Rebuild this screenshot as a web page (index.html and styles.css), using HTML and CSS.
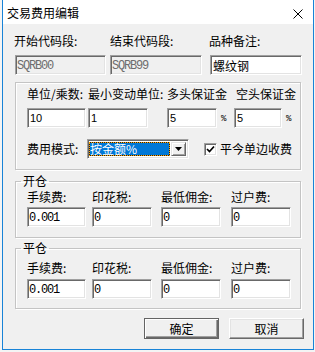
FILE: index.html
```html
<!doctype html>
<html>
<head>
<meta charset="utf-8">
<title>交易费用编辑</title>
<link rel="stylesheet" href="styles.css">
</head>

<body>
<div class="dlg">
	<!--标题栏-->
	<div class="caption">
		<span>交易费用编辑</span>
		<svg class="close" width="10" height="10" viewBox="0 0 10 10"><path d="M0.5 0.5L9.5 9.5M9.5 0.5L0.5 9.5" stroke="#000" stroke-width="1" fill="none"/></svg>
	</div>
	<div class="client">
		<!--代码段-->
		<div class="code-row">
			<label class="lbl shift">开始代码段:</label>
			<label class="lbl">结束代码段:</label>
			<label class="lbl shift">品种备注:</label>
			<input class="edit mono dis w91" value="SQRB00" disabled>
			<input class="edit mono dis w92" value="SQRB99" disabled>
			<input class="edit w92 big" value="螺纹钢">
		</div>
		<!--单位 保证金-->
		<div class="group g-unit">
			<div class="unit-grid">
				<label class="lbl">单位/乘数:</label>
				<label class="lbl">最小变动单位:</label>
				<label class="lbl">多头保证金</label>
				<label class="lbl ml2">空头保证金</label>
				<div><input class="edit num w59" value="10"></div>
				<div><input class="edit num w60 ml5" value="1"></div>
				<div class="pct"><input class="edit num w50" value="5"><span>%</span></div>
				<div class="pct"><input class="edit num w48" value="5"><span>%</span></div>
			</div>
			<div class="mode-row">
				<label class="lbl mode-lbl">费用模式:</label>
				<div class="combo">
					<span class="sel">按金额%</span>
					<span class="drop"><svg width="7" height="4" viewBox="0 0 7 4"><path d="M0 0H7L3.5 4Z" fill="#000"/></svg></span>
				</div>
				<span class="check"><svg width="9" height="9" viewBox="0 0 9 9"><path d="M1 4L3.5 6.5L8 1.5" stroke="#000" stroke-width="1.7" fill="none"/></svg></span>
				<label class="lbl">平今单边收费</label>
			</div>
		</div>
		<!--开仓-->
		<fieldset class="group g-open">
			<legend>开仓</legend>
			<div class="fee-grid">
				<label class="lbl">手续费:</label>
				<label class="lbl">印花税:</label>
				<label class="lbl">最低佣金:</label>
				<label class="lbl">过户费:</label>
				<div><input class="edit mono w59 ml1" value="0.001"></div>
				<div><input class="edit mono w60 ml3" value="0"></div>
				<div><input class="edit mono w60" value="0"></div>
				<div><input class="edit mono w60 ml2" value="0"></div>
			</div>
		</fieldset>
		<!--平仓-->
		<fieldset class="group g-close">
			<legend>平仓</legend>
			<div class="fee-grid">
				<label class="lbl">手续费:</label>
				<label class="lbl">印花税:</label>
				<label class="lbl">最低佣金:</label>
				<label class="lbl">过户费:</label>
				<div><input class="edit mono w59 ml1" value="0.001"></div>
				<div><input class="edit mono w60 ml3" value="0"></div>
				<div><input class="edit mono w60 up1" value="0"></div>
				<div><input class="edit mono w60 ml2" value="0"></div>
			</div>
		</fieldset>
		<!--按钮-->
		<div class="btn-row">
			<button class="btn def">确定</button>
			<button class="btn">取消</button>
		</div>
	</div>
</div>
</body>
</html>
```

FILE: styles.css
```css
body
{
	margin: 0;
	background-color: #f4f4f4;
	font-family: "Noto Sans CJK SC", sans-serif;
	font-size: 12px;
	color: #000;
}
/*对话框外框*/
.dlg
{
	margin-left: 2px;
	width: 312px;
	height: 350px;
	box-sizing: border-box;
	border: 1px solid #1883d7;
	border-top: none;
	background-color: #f0f0f0;
}
.caption
{
	height: 24px;
	box-sizing: border-box;
	padding: 2px 10px 0 4px;
	background-color: #fff;
	display: flex;
	align-items: center;
	justify-content: space-between;
	line-height: 16px;
}
.close
{
	display: block;
	margin-top: 2px;
}
.client
{
	padding: 9px 11px 0 12px;
}
.lbl
{
	display: block;
	height: 16px;
	line-height: 16px;
	white-space: nowrap;
}
.shift {margin-left: -1px;}
.ml1 {margin-left: 1px;}
.ml2 {margin-left: 2px;}
.ml3 {margin-left: 3px;}
.ml5 {margin-left: 5px;}
.up1 {margin-top: -1px;}

/*输入框*/
.edit
{
	display: block;
	box-sizing: border-box;
	height: 20px;
	margin: 0;
	padding: 0 0 0 1px;
	border: 1px solid;
	border-color: #a0a0a0 #fff #fff #a0a0a0;
	box-shadow: inset 1px 1px #696969, inset -1px -1px #e3e3e3;
	background-color: #fff;
	font-family: "Noto Sans CJK SC", sans-serif;
	font-size: 12px;
	color: #000;
	outline: none;
}
.edit.mono
{
	font-family: "Liberation Mono", monospace;
	font-size: 12px;
	letter-spacing: -1.2px;
	padding-top: 1px;
}
.edit.num
{
	font-family: "Liberation Sans", sans-serif;
	font-size: 11px;
	padding-left: 2px;
}
.edit.big {padding-left: 2px;}
.edit.dis
{
	background-color: #f0f0f0;
	color: #6d6d6d;
}
.w48 {width: 48px;}
.w50 {width: 50px;}
.w59 {width: 59px;}
.w60 {width: 60px;}
.w91 {width: 91px;}
.w92 {width: 92px;}

.code-row
{
	display: grid;
	grid-template-columns: 95px 100px 92px;
	row-gap: 6px;
}

/*分组框*/
.group
{
	width: 286px;
	box-sizing: border-box;
	margin: 0;
	min-width: 0;
	border: 1px solid #c4c4c4;
	box-shadow: inset 1px 1px #fff, 1px 1px #fff;
}
.group legend
{
	margin-left: -6px;
	padding: 0 2px;
	height: 16px;
	line-height: 16px;
}
.g-unit
{
	margin-top: 7px;
	padding: 3px 0 10px 11px;
}
.unit-grid
{
	display: grid;
	grid-template-columns: 61px 79px 67px auto;
	row-gap: 6px;
}
.pct
{
	display: flex;
	align-items: center;
}
.pct span
{
	margin-left: 4px;
	font-family: "Liberation Mono", monospace;
	font-size: 9px;
	margin-top: 1px;
}
.mode-row
{
	margin-top: 11px;
	height: 20px;
	display: flex;
	align-items: center;
}
.mode-lbl {width: 60px;}

/*下拉框*/
.combo
{
	display: flex;
	width: 102px;
	height: 20px;
	box-sizing: border-box;
	padding: 2px 2px 2px 1px;
	border: 1px solid;
	border-color: #a0a0a0 #fff #fff #a0a0a0;
	box-shadow: inset 1px 1px #696969, inset -1px -1px #e3e3e3;
	background-color: #fff;
}
.sel
{
	flex: 1;
	border: 1px dotted #ffa400;
	background: linear-gradient(#0078d7, #0078d7) padding-box, #222;
	color: #fff;
	line-height: 12px;
	padding-left: 0;
	white-space: nowrap;
	margin-right: 1px;
}
.drop
{
	width: 15px;
	box-sizing: border-box;
	border: 1px solid;
	border-color: #e3e3e3 #696969 #696969 #e3e3e3;
	box-shadow: inset 1px 1px #fff, inset -1px -1px #a0a0a0;
	background-color: #f0f0f0;
	display: flex;
	align-items: center;
	justify-content: center;
}
.drop svg {display: block;}

/*复选框*/
.check
{
	width: 13px;
	height: 13px;
	box-sizing: border-box;
	margin-left: 15px;
	margin-right: 3px;
	border: 1px solid;
	border-color: #a0a0a0 #fff #fff #a0a0a0;
	box-shadow: inset 1px 1px #696969, inset -1px -1px #e3e3e3;
	background-color: #fff;
	display: flex;
	align-items: center;
	justify-content: center;
}
.check svg {display: block;}

.g-open
{
	margin-top: 3px;
	padding: 0 0 10px 11px;
}
.g-close
{
	margin-top: 2px;
	padding: 4px 0 9px 11px;
}
.fee-grid
{
	display: grid;
	grid-template-columns: 65px 69px 70px auto;
	row-gap: 2px;
}
.g-close .fee-grid {row-gap: 3px;}

/*按钮*/
.btn-row
{
	margin-top: 9px;
	margin-right: -2px;
	display: flex;
	justify-content: flex-end;
	gap: 10px;
}
.btn
{
	width: 75px;
	height: 21px;
	box-sizing: border-box;
	margin: 0;
	padding: 0;
	border: 1px solid;
	border-color: #fff #696969 #696969 #fff;
	box-shadow: inset -1px -1px #a0a0a0, inset 1px 1px #e3e3e3;
	background-color: #f0f0f0;
	font-family: "Noto Sans CJK SC", sans-serif;
	font-size: 12px;
	line-height: 16px;
	color: #000;
}
.btn.def
{
	border-color: #646464;
	box-shadow: inset 1px 1px #fff, inset -1px -1px #696969, inset -2px -2px #a0a0a0;
}
```
